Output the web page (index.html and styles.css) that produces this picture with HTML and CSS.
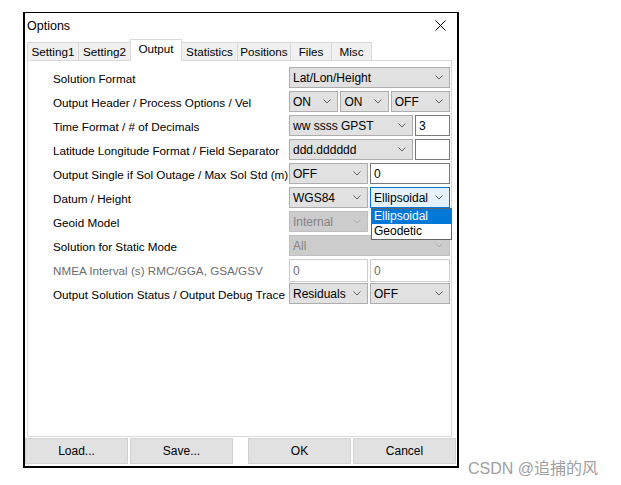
FILE: index.html
```html
<!DOCTYPE html>
<html lang="en">
<head>
    <meta charset="UTF-8">
    <title>Options</title>
    <link rel="stylesheet" href="styles.css">
</head>
<body>
    <div class="dialog">
        <div class="titlebar">
            <span class="title">Options</span>
            <svg class="close" width="11" height="11" viewBox="0 0 11 11"><path d="M0.5 0.5 L10.5 10.5 M10.5 0.5 L0.5 10.5" stroke="#000" stroke-width="1" fill="none"/></svg>
        </div>

        <div class="tabs">
            <div class="tab">Setting1</div>
            <div class="tab">Setting2</div>
            <div class="tab active">Output</div>
            <div class="tab">Statistics</div>
            <div class="tab">Positions</div>
            <div class="tab">Files</div>
            <div class="tab">Misc</div>
        </div>

        <div class="page">
            <div class="row">
                <div class="label">Solution Format</div>
                <div class="ctrls">
                    <div class="combo full"><span>Lat/Lon/Height</span><svg class="chev" width="8" height="5" viewBox="0 0 8 5"><path d="M0.5 0.5 L4 4 L7.5 0.5" /></svg></div>
                </div>
            </div>
            <div class="row">
                <div class="label">Output Header / Process Options / Vel</div>
                <div class="ctrls">
                    <div class="combo w50"><span>ON</span><svg class="chev" width="8" height="5" viewBox="0 0 8 5"><path d="M0.5 0.5 L4 4 L7.5 0.5" /></svg></div>
                    <div class="combo w49"><span>ON</span><svg class="chev" width="8" height="5" viewBox="0 0 8 5"><path d="M0.5 0.5 L4 4 L7.5 0.5" /></svg></div>
                    <div class="combo w60"><span>OFF</span><svg class="chev" width="8" height="5" viewBox="0 0 8 5"><path d="M0.5 0.5 L4 4 L7.5 0.5" /></svg></div>
                </div>
            </div>
            <div class="row">
                <div class="label">Time Format / # of Decimals</div>
                <div class="ctrls">
                    <div class="combo w124"><span>ww ssss GPST</span><svg class="chev" width="8" height="5" viewBox="0 0 8 5"><path d="M0.5 0.5 L4 4 L7.5 0.5" /></svg></div>
                    <div class="edit w35">3</div>
                </div>
            </div>
            <div class="row">
                <div class="label">Latitude Longitude Format / Field Separator</div>
                <div class="ctrls">
                    <div class="combo w124"><span>ddd.dddddd</span><svg class="chev" width="8" height="5" viewBox="0 0 8 5"><path d="M0.5 0.5 L4 4 L7.5 0.5" /></svg></div>
                    <div class="edit w35"></div>
                </div>
            </div>
            <div class="row">
                <div class="label">Output Single if Sol Outage / Max Sol Std (m)</div>
                <div class="ctrls">
                    <div class="combo w79"><span>OFF</span><svg class="chev" width="8" height="5" viewBox="0 0 8 5"><path d="M0.5 0.5 L4 4 L7.5 0.5" /></svg></div>
                    <div class="edit w80">0</div>
                </div>
            </div>
            <div class="row">
                <div class="label">Datum / Height</div>
                <div class="ctrls">
                    <div class="combo w79"><span>WGS84</span><svg class="chev" width="8" height="5" viewBox="0 0 8 5"><path d="M0.5 0.5 L4 4 L7.5 0.5" /></svg></div>
                    <div class="combo w80 focus"><span>Ellipsoidal</span><svg class="chev" width="8" height="5" viewBox="0 0 8 5"><path d="M0.5 0.5 L4 4 L7.5 0.5" /></svg>
                        <div class="dropdown">
                            <div class="item selected">Ellipsoidal</div>
                            <div class="item">Geodetic</div>
                        </div>
                    </div>
                </div>
            </div>
            <div class="row">
                <div class="label">Geoid Model</div>
                <div class="ctrls">
                    <div class="combo w79 disabled"><span>Internal</span><svg class="chev" width="8" height="5" viewBox="0 0 8 5"><path d="M0.5 0.5 L4 4 L7.5 0.5" /></svg></div>
                </div>
            </div>
            <div class="row">
                <div class="label">Solution for Static Mode</div>
                <div class="ctrls">
                    <div class="combo full disabled"><span>All</span><svg class="chev" width="8" height="5" viewBox="0 0 8 5"><path d="M0.5 0.5 L4 4 L7.5 0.5" /></svg></div>
                </div>
            </div>
            <div class="row">
                <div class="label off">NMEA Interval (s) RMC/GGA, GSA/GSV</div>
                <div class="ctrls">
                    <div class="edit w79 disabled tall">0</div>
                    <div class="edit w80 disabled tall">0</div>
                </div>
            </div>
            <div class="row">
                <div class="label">Output Solution Status / Output Debug Trace</div>
                <div class="ctrls">
                    <div class="combo w79"><span>Residuals</span><svg class="chev" width="8" height="5" viewBox="0 0 8 5"><path d="M0.5 0.5 L4 4 L7.5 0.5" /></svg></div>
                    <div class="combo w80"><span>OFF</span><svg class="chev" width="8" height="5" viewBox="0 0 8 5"><path d="M0.5 0.5 L4 4 L7.5 0.5" /></svg></div>
                </div>
            </div>
        </div>

        <div class="buttons">
            <div class="btn">Load...</div>
            <div class="btn">Save...</div>
            <div class="spacer"></div>
            <div class="btn">OK</div>
            <div class="btn">Cancel</div>
        </div>
    </div>

    <div class="watermark">CSDN @追捕的风</div>
</body>
</html>
```

FILE: styles.css
```css
body {
    margin: 0;
    background: #fff;
    font-family: "Liberation Sans", Arial, sans-serif;
    font-size: 12px;
    color: #000;
}
.dialog {
    margin: 12px 0 0 23px;
    width: 432px;
    height: 453px;
    border: 2px solid #000;
    border-top-width: 1px;
    background: #fff;
    display: flex;
    flex-direction: column;
}
.titlebar {
    height: 26px;
    display: flex;
    align-items: center;
    justify-content: space-between;
    padding: 0 11px 0 2px;
}
.title {
    font-size: 12.5px;
}
.close {
    margin-top: -2px;
}

/* tab strip */
.tabs {
    height: 21px;
    display: flex;
    align-items: flex-end;
    margin-left: 2px;
}
.tab {
    box-sizing: border-box;
    height: 18px;
    line-height: 17px;
    text-align: center;
    background: #f0f0f0;
    border: 1px solid #d9d9d9;
    border-bottom: none;
    margin-right: -1px;
    font-size: 11.7px;
}
.tab:nth-child(1) { width: 52px; }
.tab:nth-child(2) { width: 53px; }
.tab:nth-child(3) { width: 52px; }
.tab:nth-child(4) { width: 57px; }
.tab:nth-child(5) { width: 54px; }
.tab:nth-child(6) { width: 42px; }
.tab:nth-child(7) { width: 41px; }
.tab.active {
    height: 22px;
    line-height: 18px;
    background: #fff;
    margin-bottom: -1px;
    position: relative;
    z-index: 1;
}

/* page body */
.page {
    margin-left: 2px;
    width: 398px;
    height: 369px;
    border: 1px solid #d9d9d9;
    padding: 6px 0 0 25px;
}
.row {
    height: 24px;
    display: flex;
    align-items: flex-start;
}
.label {
    width: 236px;
    flex: none;
    line-height: 21px;
    padding-top: 1px;
    white-space: nowrap;
    font-size: 11.7px;
}
.label.off {
    color: #6d6d6d;
}
.ctrls {
    width: 161px;
    display: flex;
    gap: 2px;
}
.combo, .edit {
    box-sizing: border-box;
    height: 21px;
    padding: 0 6px 0 3px;
    display: flex;
    align-items: center;
    white-space: nowrap;
}
.combo {
    background: #e1e1e1;
    border: 1px solid #adadad;
    justify-content: space-between;
}
.edit {
    background: #fff;
    border: 1px solid #7a7a7a;
}
.edit.tall {
    height: 23px;
}
.chev {
    flex: none;
}
.chev path {
    fill: none;
    stroke: #606060;
    stroke-width: 1;
}
.combo.focus {
    background: #e5f1fb;
    border-color: #0078d7;
    position: relative;
}
.combo.disabled {
    background: #cccccc;
    border-color: #bfbfbf;
    color: #838383;
}
.combo.disabled .chev path {
    stroke: #b0b0b0;
}
.edit.disabled {
    border-color: #cccccc;
    color: #6d6d6d;
}
.full { width: 161px; }
.w50 { width: 50px; }
.w49 { width: 49px; }
.w60 { width: 60px; }
.w124 { width: 124px; }
.w35 { width: 35px; }
.w79 { width: 79px; }
.w80 { width: 80px; }

.dropdown {
    position: absolute;
    top: 20px;
    left: 0;
    width: 81px;
    box-sizing: border-box;
    border: 1px solid #646464;
    background: #fff;
    z-index: 2;
}
.item {
    height: 15px;
    line-height: 15px;
    padding-left: 2px;
    color: #000;
}
.item.selected {
    background: #0078d7;
    color: #fff;
}

/* bottom buttons */
.buttons {
    display: flex;
    gap: 2px;
    height: 26px;
    margin-top: 1px;
}
.btn {
    width: 103px;
    box-sizing: border-box;
    background: #e1e1e1;
    border: 1px solid #d2d2d2;
    display: flex;
    align-items: center;
    justify-content: center;
}
.spacer {
    width: 11px;
}
.watermark {
    position: absolute;
    left: 468px;
    top: 455px;
    font-family: "Liberation Sans", "Noto Sans CJK SC", sans-serif;
    font-size: 16px;
    color: #a0a0a0;
}
```
